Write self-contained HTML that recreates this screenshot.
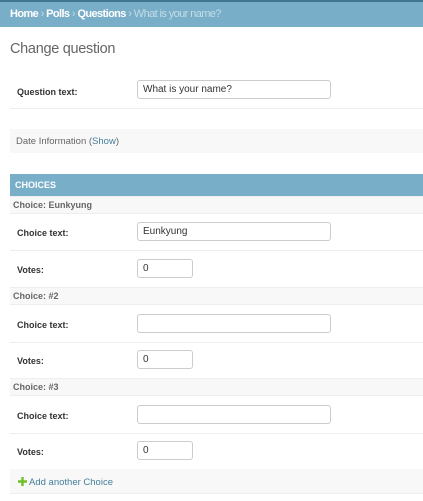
<!DOCTYPE html>
<html><head><meta charset="utf-8"><style>
*{box-sizing:border-box;margin:0;padding:0}
body{width:423px;height:501px;overflow:hidden;background:#fff;font-family:"Liberation Sans",sans-serif;font-size:10px;color:#333;position:relative}
.abs{position:absolute}
.bc{left:0;top:0;width:423px;height:27px;background:#79aec8;border-top:2px solid #417690;color:#c4dce8;font-size:11px;line-height:25px;padding-left:10px;letter-spacing:-0.6px;white-space:nowrap}
.bc b{color:#fff;font-weight:bold}
h1{position:absolute;left:10px;top:41px;font-size:14.5px;font-weight:normal;color:#666;letter-spacing:-0.3px}
.lbl{position:absolute;left:17px;font-weight:bold;font-size:9px;color:#333}
.inp{position:absolute;left:137px;height:19px;border:1px solid #ccc;border-radius:3px;font-size:10px;line-height:17px;padding-left:5px;color:#333;background:#fff}
.w{width:194px}.s{width:56px}
.hr{position:absolute;left:10px;right:0;height:1px;background:#eee}
.gray{position:absolute;left:10px;right:0;background:#f8f8f8}
.sub{position:absolute;left:10px;right:0;height:18px;background:#f8f8f8;border-top:1px solid #eee;border-bottom:1px solid #eee;color:#666;font-weight:bold;font-size:9px;line-height:17px;padding-left:3px}
</style></head><body>
<div class="abs bc"><b>Home</b> › <b>Polls</b> › <b>Questions</b> › What is your name?</div>
<h1>Change question</h1>
<div class="lbl" style="top:87px">Question text:</div>
<div class="inp w" style="top:80px">What is your name?</div>
<div class="hr" style="top:108px"></div>
<div class="gray" style="top:129px;height:24px;color:#666;font-size:9.5px;line-height:25px;padding-left:6px">Date Information (<span style="color:#447e9b">Show</span>)</div>
<div class="abs" style="left:10px;right:0;top:174px;height:22px;background:#79aec8;color:#fff;font-weight:bold;font-size:9px;line-height:22px;padding-left:5px">CHOICES</div>
<div class="sub" style="top:196px">Choice: Eunkyung</div>
<div class="lbl" style="top:228px">Choice text:</div>
<div class="inp w" style="top:222px">Eunkyung</div>
<div class="hr" style="top:250px"></div>
<div class="lbl" style="top:265px">Votes:</div>
<div class="inp s" style="top:259px">0</div>
<div class="sub" style="top:287px">Choice: #2</div>
<div class="lbl" style="top:320px">Choice text:</div>
<div class="inp w" style="top:314px"></div>
<div class="hr" style="top:342px"></div>
<div class="lbl" style="top:356px">Votes:</div>
<div class="inp s" style="top:350px">0</div>
<div class="sub" style="top:378px">Choice: #3</div>
<div class="lbl" style="top:411px">Choice text:</div>
<div class="inp w" style="top:405px"></div>
<div class="hr" style="top:433px"></div>
<div class="lbl" style="top:447px">Votes:</div>
<div class="inp s" style="top:441px">0</div>
<div class="gray" style="top:469px;height:25px;border-bottom:1px solid #eee;font-size:9.5px;line-height:27px;padding-left:8px;color:#447e9b">
<svg width="9" height="9" viewBox="0 0 9 9" style="vertical-align:-1px;margin-right:2px"><path d="M3.3 0h2.4v3.3H9v2.4H5.7V9H3.3V5.7H0V3.3h3.3z" fill="#70bf2b"/></svg>Add another Choice</div>
</body></html>
